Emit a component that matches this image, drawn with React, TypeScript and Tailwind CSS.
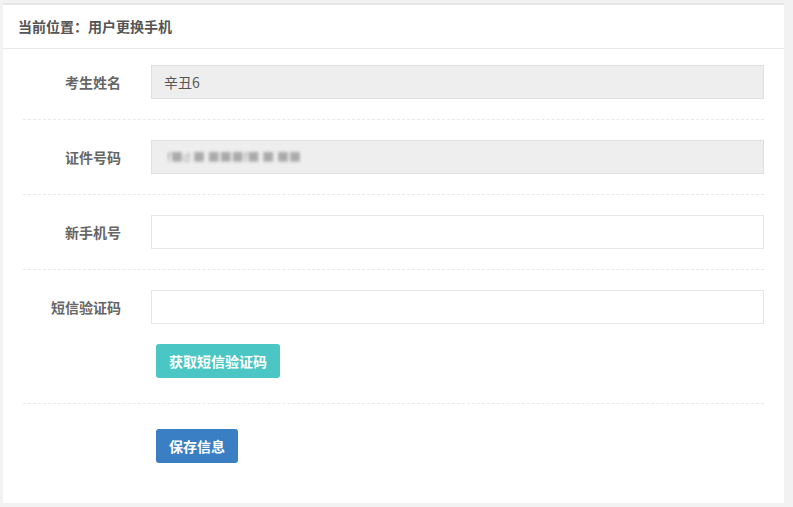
const font = { fontFamily: '"Noto Sans CJK SC", "Noto Sans", sans-serif' };

const Row = ({ label, children }: { label: string; children: React.ReactNode }) => (
  <div className="flex items-center">
    <label className="w-[98px] shrink-0 text-right text-[14px] font-bold text-[#666]">{label}</label>
    <div className="ml-[30px] flex-1">{children}</div>
  </div>
);

const Divider = () => <div className="my-[20px] border-t border-dashed border-[#e7eaec]" />;

export default function App() {
  return (
    <div className="min-h-[507px] bg-[#f2f2f2] pl-[3px] pr-[9px] pt-[3px] pb-[4px]" style={font}>
      <div className="border-t-2 border-[#e6e6e6] bg-white">
        <div className="flex h-[44px] items-center border-b border-[#e7eaec] px-[15px] text-[14px] font-bold text-[#555]">
          当前位置：用户更换手机
        </div>
        <div className="px-[20px] pt-[16px] pb-[40px]">
          <Row label="考生姓名">
            <div className="flex h-[34px] items-center border border-[#e0e0e0] bg-[#eeeeee] px-[12px] text-[14px] text-[#555]">
              辛丑6
            </div>
          </Row>
          <Divider />
          <Row label="证件号码">
            <div className="flex h-[34px] items-center border border-[#e0e0e0] bg-[#eeeeee] px-[12px] text-[14px] text-[#555]">
              <span className="ml-[3px] blur-[1.5px] text-[12px] text-[#aaa]">f■d ■ ■■■f■ ■ ■■</span>
            </div>
          </Row>
          <Divider />
          <Row label="新手机号">
            <input className="block h-[34px] w-full border border-[#e5e6e7] bg-white px-[12px] text-[14px] outline-none" />
          </Row>
          <Divider />
          <Row label="短信验证码">
            <input className="block h-[34px] w-full border border-[#e5e6e7] bg-white px-[12px] text-[14px] outline-none" />
          </Row>
          <div className="mt-[20px] pl-[133px]">
            <button className="h-[34px] w-[124px] rounded-[3px] bg-[#4ac6c4] text-[14px] font-bold text-white">
              获取短信验证码
            </button>
          </div>
          <div className="mt-[25px] mb-[25px] border-t border-dashed border-[#e7eaec]" />
          <div className="pl-[133px]">
            <button className="h-[34px] w-[82px] rounded-[3px] bg-[#3a7fc3] text-[14px] font-bold text-white">
              保存信息
            </button>
          </div>
        </div>
      </div>
    </div>
  );
}
